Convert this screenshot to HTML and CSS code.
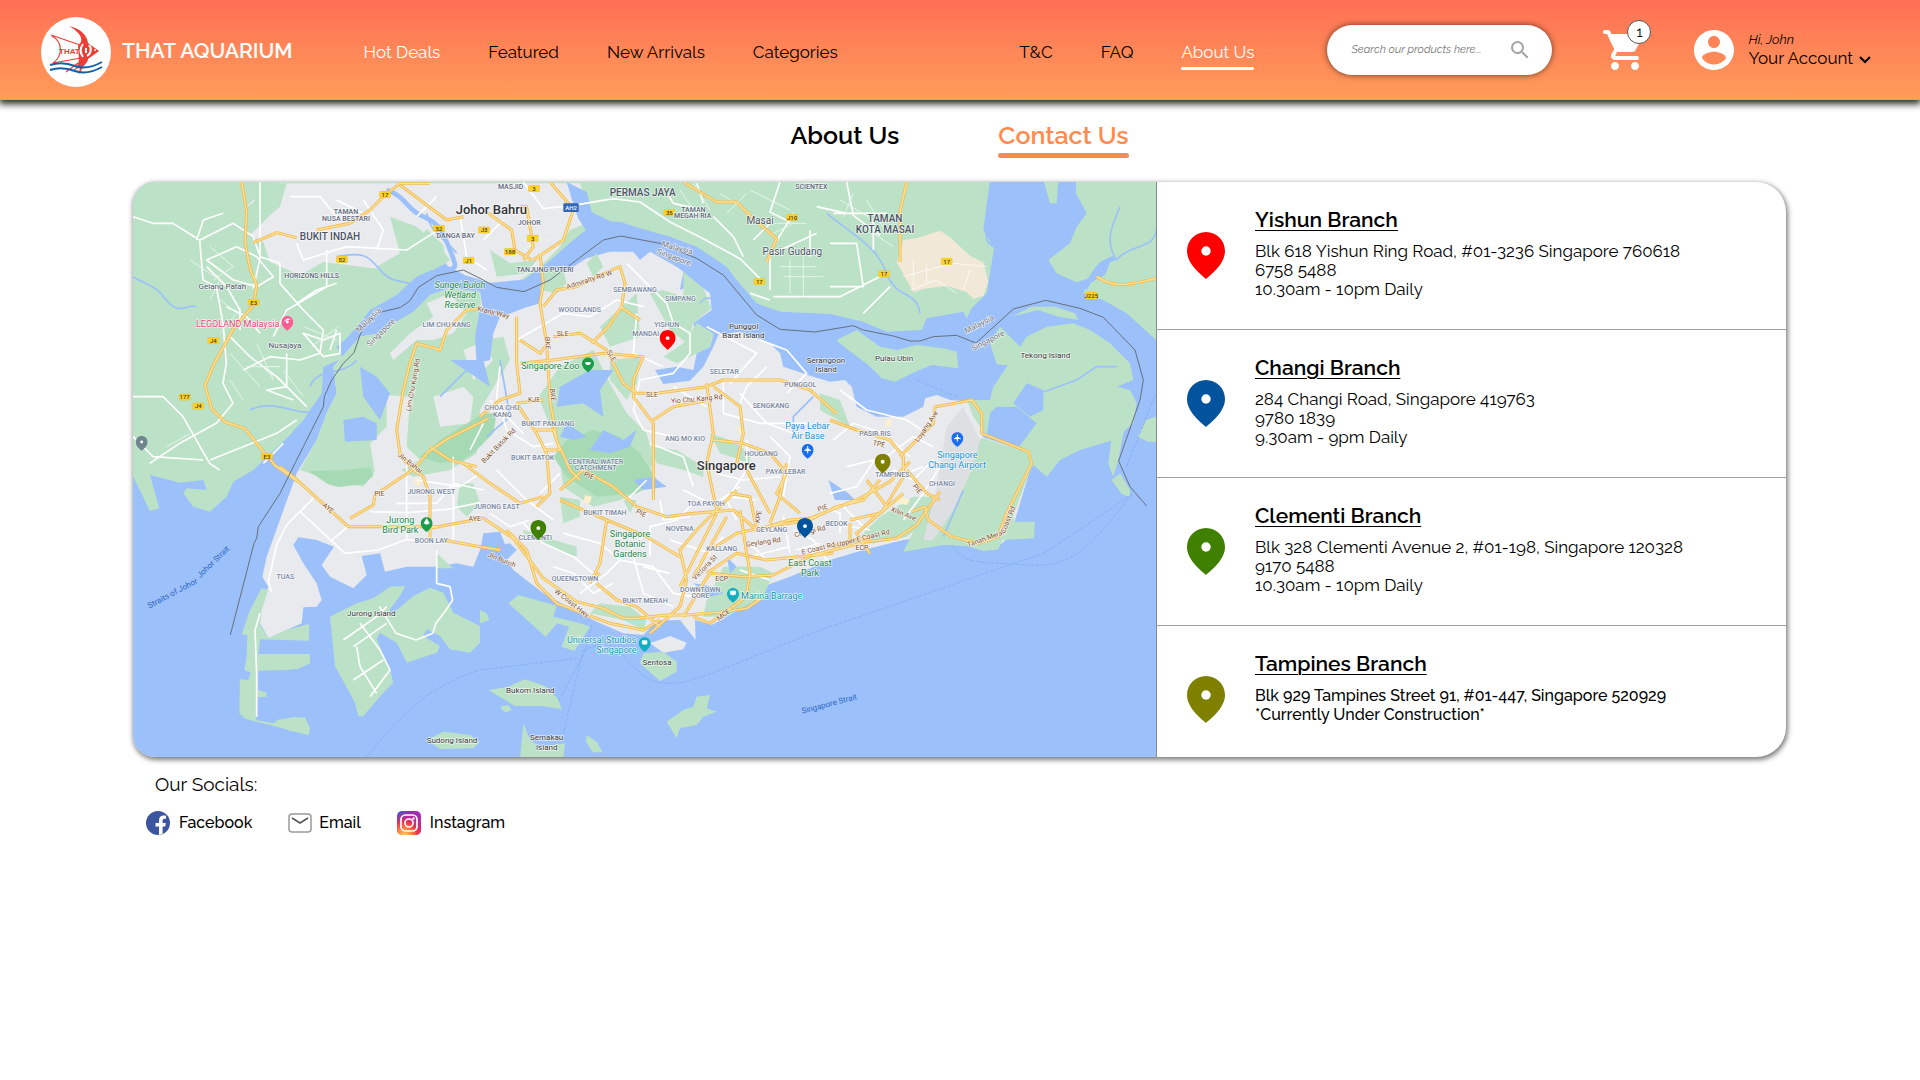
FILE: index.html
```html
<!DOCTYPE html>
<html lang="en">
<head>
<meta charset="utf-8">
<meta name="viewport" content="width=device-width, initial-scale=1">
<title>That Aquarium - Contact Us</title>
<link rel="stylesheet" href="styles.css">
</head>
<body>
<svg class="defs" aria-hidden="true">
  <symbol id="pin" viewBox="0 0 38 47"><path d="M19 0C8.500 0 0 8.500 0 19c0 12 12 22 19 28 7-6 19-16 19-28C38 8.500 29.500 0 19 0z"/><circle cx="19" cy="19" r="4.700" fill="#fff"/></symbol>
  <symbol id="shield" viewBox="0 0 36 22"><rect x="1" y="1" width="34" height="20" rx="5" fill="#fdd32e" stroke="#e0aa18"/></symbol>
</svg>

<header class="header">
  <a class="brand" href="#">
    <svg class="brand-logo" viewBox="0 0 70 70" aria-hidden="true">
      <circle cx="35" cy="35" r="35" fill="#fff"/>
      <path d="M28 9c12 3 18 9 19 17l11 8-11 8c0 4-4 5-6 10l-3 5 1-7-9 5c5-3 7-7 8-12l-1-14 3-4c2-6-5-12-12-16z" fill="#ee3d34"/>
      <path d="M10 18l32 11M11 19c11 6 11 20 1 27l28-5M37 46l-12 9" fill="none" stroke="#ee3d34" stroke-width="1.200"/>
      <path d="M42 27c-3 4-3 9 0 13M48 28c3 3 2 9-2 11M45 31v5" fill="none" stroke="#fff" stroke-width="2"/>
      <circle cx="54" cy="33" r="1" fill="#fff"/>
      <text class="brand-mark" x="18" y="37">THAT</text>
      <path d="M9 48c9-3 17-2 25 1s18 1 27-4M9 53c9-3 17-2 25 1s18 1 27-4" fill="none" stroke="#1660a8" stroke-width="2"/>
    </svg>
    <span class="brand-name">THAT AQUARIUM</span>
  </a>
  <nav class="nav nav-shop" aria-label="Shop">
    <a class="nav-light" href="#">Hot Deals</a>
    <a href="#">Featured</a>
    <a href="#">New Arrivals</a>
    <a href="#">Categories</a>
  </nav>
  <nav class="nav nav-info" aria-label="Information">
    <a href="#">T&amp;C</a>
    <a href="#">FAQ</a>
    <a class="nav-light nav-current" href="#">About Us</a>
  </nav>
  <form class="search" role="search">
    <input class="search-input" type="search" aria-label="Search our products" placeholder="Search our products here...">
    <button class="search-button" type="submit" aria-label="Search">
      <svg viewBox="0 0 24 24" width="24" height="24"><path fill="#a3a3a3" d="M15.500 14h-.79l-.28-.27A6.470 6.470 0 0 0 16 9.500 6.500 6.500 0 1 0 9.500 16c1.610 0 3.090-.59 4.230-1.570l.27.28v.79l5 4.990L20.490 19l-4.990-5zm-6 0C7.010 14 5 11.990 5 9.500S7.010 5 9.500 5 14 7.010 14 9.500 11.990 14 9.500 14z"/></svg>
    </button>
  </form>
  <a class="cart" href="#" aria-label="Shopping cart">
    <svg viewBox="0 0 24 24" width="48" height="48"><path fill="#fff" d="M7 18c-1.100 0-1.990.9-1.990 2S5.900 22 7 22s2-.9 2-2-.9-2-2-2zM2 2C.7 2 .7 4 2 4h1l3.600 7.590-1.350 2.450C4.520 15.370 5.480 17 7 17h11c1.300 0 1.300-2 0-2H7.420c-.14 0-.25-.11-.25-.25l.03-.12.9-1.630h7.450c.75 0 1.410-.41 1.750-1.030l3.580-6.490c.36-.66-.12-1.480-.88-1.480H5.210l-.67-1.430C4.380 2.200 4 2 3.640 2H2zm15 16c-1.100 0-1.990.9-1.990 2s.89 2 1.990 2 2-.9 2-2-.9-2-2-2z"/></svg>
    <span class="cart-count">1</span>
  </a>
  <button class="account" type="button">
    <svg viewBox="0 0 24 24" width="48" height="48" aria-hidden="true"><path fill="#fff" d="M12 2C6.480 2 2 6.480 2 12s4.480 10 10 10 10-4.480 10-10S17.520 2 12 2zm0 3c1.660 0 3 1.340 3 3s-1.340 3-3 3-3-1.340-3-3 1.340-3 3-3zm0 14.200c-2.500 0-4.710-1.280-6-3.220.03-1.990 4-3.080 6-3.080 1.990 0 5.970 1.090 6 3.080-1.290 1.940-3.500 3.220-6 3.220z"/></svg>
    <span class="account-text">
      <span class="account-hi">Hi, John</span>
      <span class="account-name">Your Account</span>
    </span>
    <svg class="account-arrow" viewBox="0 0 12 8" width="12" height="8" aria-hidden="true"><path d="M1 1l5 5 5-5" fill="none" stroke="#000" stroke-width="2"/></svg>
  </button>
</header>

<main class="main">
  <nav class="tabs" aria-label="About">
    <a class="tab" href="#">About Us</a>
    <a class="tab tab-current" href="#">Contact Us</a>
  </nav>

  <section class="card" aria-label="Branches">
    <div class="map">
    <svg class="map-canvas" viewBox="9 6 3069 1725" preserveAspectRatio="xMidYMid slice" role="img" aria-label="Map of Singapore with branch locations">
      <!-- Malaysia -->
      <path class="land" d="M0 0H2580L2560 150 2592 205 2570 340 2525 385 2510 415 2500 395 2390 415 2375 450 2270 455 2200 425 2100 402 1950 395 1880 370 1820 300 1790 260 1700 200 1620 170 1530 145 1470 125 1400 125 1330 180 1250 250 1180 300 1110 295 1050 265 980 240 950 250 860 290 800 345 720 390 690 430 650 475 620 500 640 535 580 560 575 640 520 720 480 765 370 870 310 905 290 950 240 995 190 980 160 940 170 925 230 930 220 900 150 908 60 885 88 985 60 993 0 870z"/>
      <path class="land" d="M2740 0h45l-5 70h-20zM2838 0v40l32 60-30 40-20 50-65 50 25 40 60 27 50-17 20-30 35-25-20 50-55 30-10 25 60 20 70 40 88 80V0zM3078 710l-30 10-25 50 30 15h25z"/>
      <!-- Johor Bahru urban area -->
      <path class="urban" d="M370 60l60-50H1350l20 60 0 60-50 20-30 50-50 50-70 50-90 8-75-22-55-30-10-60-50-50-50 70-100 50-160-20-70 40-90-40-20-60-40-20 60-60-20-60-70 50z"/>
      <path class="land" d="M380 10l90 0-20 70-60 50-20-40zM780 110l80 30 60 50 40 50-50 30-90 0-80-10 70-40zM1080 210l60 40 80 -10-30 40-90 10z"/>
      <path class="water" d="M1310 6l60 30 15 60 60 30-60 50-40-60-20-60z"/>
      <path class="sand" d="M2320 180l40-5 70-23 30 20 60 55 40 20 15 60-15 40-30 10-20-20-60-20-70 10-30 10-50-90z"/>
      <!-- Singapore mainland -->
      <path class="urban" d="M850 400L900 345 960 325 1050 335 1060 395 1130 405 1180 385 1230 370 1240 320 1300 280 1370 235 1440 215 1510 215 1530 240 1560 215 1640 260 1660 275 1650 330 1700 310 1740 340 1745 390 1690 430 1700 480 1750 465 1740 500 1700 520 1690 570 1640 560 1575 570 1600 612 1680 602 1720 560 1750 500 1765 465 1830 455 1920 490 1950 520 1960 560 2050 590 2100 605 2145 600 2165 620 2180 680 2240 710 2320 710 2380 680 2385 655 2420 645 2460 660 2530 665 2560 772 2690 815 2718 845 2700 870 2640 1070 2590 1110 2510 1095 2440 1095 2440 1062 2320 1080 2200 1110 2100 1140 1980 1190 1870 1230 1850 1270 1790 1310 1745 1335 1695 1320 1697 1380 1650 1320 1580 1322 1540 1365 1480 1360 1400 1325 1330 1290 1240 1240 1150 1170 1130 1140 1160 1110 1140 1090 1050 1110 1030 1160 980 1150 910 1160 830 1160 765 1175 750 1120 695 1128 710 1185 670 1225 600 1190 575 1155 612 1100 560 1080 505 1072 490 1095 520 1150 560 1210 575 1260 560 1280 520 1282 515 1330 415 1375 390 1330 395 1260 415 1220 397 1190 410 1130 500 880 560 780 590 700 620 640 610 560 690 470 750 460 790 430z"/>
      <!-- Parks and nature reserves -->
      <path class="land" d="M510 870L560 780 590 700 620 640 610 560 690 470 750 460 790 430 850 395 900 345 960 325 1050 335 1060 480 1120 470 1140 540 1050 690 1040 820 960 870 850 890 760 840 700 920 600 900z"/>
      <path class="urban" d="M890 370l70-30 50 60-40 60-60 20-50 0-70 60-10-20 60-60 70-50zM770 645l70 5-10 150 40 40-130 70-20-120 50-50zM910 650l90-30 30 30-10 80-90 10zM1000 510l50-20 40 50-60 60z"/>
      <path class="forest" d="M535 873l60 40 30 8 80-10 25-25-10-25-80 10zM870 830l60-50 130-80 40 0-10 60-50 50-40 30-70 10z"/>
      <path class="land" d="M395 1225L360 1290 335 1362 352 1365 350 1430 343 1470 362 1478 355 1500 330 1498 328 1600 345 1616 440 1640 535 1666 540 1645 525 1612 490 1614 470 1628 445 1620 430 1630 378 1620 383 1552 410 1550 410 1538 385 1530 383 1500 385 1472 470 1470 505 1466 540 1450 540 1422 385 1422 390 1378 537 1382 537 1332 470 1350 415 1375 390 1335 395 1290 415 1230z"/>
      <path class="land" d="M1290 560l100-50 50 100 50 90 60 60 20 80-30 90-70 30-80 20-90-60-15-120-60-150zM1410 440l110-100 10 130-90 30zM1440 540l90-10-10 80-30 50-50-60z"/>
      <path class="forest" d="M1310 780l80-30 80 20 60 50 50 80-60 40-120 10-90-60-40-60z"/>
      <path class="land" d="M1660 275l60 50 25 60-55 45-20 60-50-40-60-110 40-10 60 20zM1700 430l50 30-10 40-60 30-40 20-40-20 60-40zM1740 760l60 20 60 40 0 30-90-30zM1240 270l60 0 10 40-30 30-50-10zM1370 250l30-30 20 40-30 30zM1560 800l80 10 80 50 0 30-60-20-80-20zM1180 1050l60 20 100 30 0 30-60-20-100-50zM1410 1270l90 10 50 40-10 30-60-30-100-20zM2070 640l60 20 30 80-90-50zM920 1120l0 45 50 0zM990 910l40 0 20 60-40 40-30-30zM1290 950l60 10 0 50-50 20zM1480 960l40 0-20 40z"/>
      <path class="land" d="M2555 773l135 42 28 30-18 25-50 140 5 15 60 0-3 50-95 5-12 28-45 5-50-15-70-3-120 20 50-100 80-100 60-70zM2350 950l60 0-30 80-50 40-100 20-60 0 80-80zM1780 1160l110 0 40 20-30 70-110 60-70 0 10-50z"/>
      <path class="apron" d="M2500 680l50 100-20 80-60 130-60 90h-30l40-160 30-180z"/>
      <g class="sandy"><path d="M2270 720l15-5-5 25-15 0zM1820 740l25 5-15 20zM1365 945l20 5-5 20-20 0zM2310 950l30 10-10 15-30-5zM860 890l15 10-8 20-15-12z"/></g>
      <!-- Islands -->
      <path class="land" d="M2120 480l60-30 70 50 50 10 60-15 80 10 40 10 5 50-80-10-50 20-60 30-40-10-40-40-80-60zM2580 490l30-50 60 60 10 50-20 8-60-5zM2645 410l60-30 70 0 60 20 10 20-60-10-60-20zM2690 470l60-30 80-10 50 20 60 40 60 60 10 50-50 20 40 10 20 40-10 60-60 50-100 30-60 30-40 50-90-80 60-80-60-50-60 0-20 20-10 70-40-60-20-50 70 0 10-40z"/>
      <path class="land" d="M600 1310l20-10 60-30 50-15 50-35 45-2-15 30-30 40 0 20 70-60 50-25 40 15 30 60 80 40 0 50-30 30-60-10-30-40-40-20-10 20 50 30-10 20-90 30-30-60-50-30-10 20 40 90 10 40-30 30-60 70-15 0-10-40-60-110z"/>
      <path class="land" d="M890 1680l50-25 80 10 30 20-20 20-100 2zM1075 1530l60-10 50-22 60 20 40 40 10 30-60-10-80 0zM1110 1580l25-5 10 15-20 8zM1180 1630l20 50 30 20 75-10-5 45-130 0zM1370 1665l30 20 18 32-30 0-20-32zM1135 1270l30-25 115 32-10 33 80 20 30 10-47 73-38-13 22-60-36-10-34 40zM440 1620l60-10 25 20 15 30-60-6zM1660 1590l30 -10 10-30 40-5-10 40 30 10-40 15-20 25-50 10-10 30-30-50zM1050 1290l20 10 8 20-28 10z"/>
      <path class="urban" d="M1560 1390l60-22 50 20-10 20-60 10z"/>
      <path class="land" d="M1540 1420l60-5 40 30 0 30-50 28-60-53zM2970 880l30 50 0 20-25-8-30-42zM2990 670l10 30-20 60-15 80-15 50-15-40 10-80z"/>
      <!-- Reservoirs and rivers -->
      <path class="water" d="M1050 385l60 25-20 50-10 80-40 10-5-80zM1290 620l90-50 70 0-40 60 10 80-60-40-80 10zM1420 750l60 30 40-30-20 50-60 20-60-10zM1370 770l-40 10-40-10 20-40zM1060 1060l50-5 20 50-30 30-50-20zM690 560l50 30 40 50-30 80-50-70zM640 720l60-10 40 20 0 50-95 5zM960 540l100 0 20 80-60-40zM1510 900l60-10 40 30-70 10zM2690 610l50 20 0 60-40 20-50-40zM2095 900l60 40 20 20-60 0zM1790 1130l10 50 20-20zM1690 1210l60 10 30 20-40 10z"/>
      <path class="river" d="M9 290c50 30 60 20 100 70s60 10 90 20M620 230c100-20 100 10 140 50s80 10 90 50M980 220c-30-40-80-60-90-120M2090 100c100 80 150 100 180 180s90 50 100 120M2650 100c-30 60-70 20-80 60s40 40 50 60M2960 240c-40-60-10-110 10-160M2960 240c40-50 120-30 120-100M540 620c20-60 100-30 140-80M360 690c80-40 150 30 220 0M1710 370c20-30 60-20 80 60M2700 650l140-50 60-40h60M930 650l60-60 50-50M2500 930l-60 140M1110 540l30 170-70 60M1610 240l-10-60M2050 650l-60 60 0 60"/>
      <path class="river river-wide" d="M770 30c60 20 60 60 110 80s60 50 80 100 20 50 0 60M2955 235c-50 10-60 40-90 90"/>
      <!-- Local roads -->
      <g class="streets">
        <path d="M9 110l60 20 60 0 80 50 10 120 40 20 20 110 10 120-10 60 30 60-50 60-110 60-90 60M9 650h90l60 60 80 140 30 20M210 180l100-50 60 40 20 60 60 20 0 60 70 80 60 60-10 70-60 20-90-10-80 40M390 6v230l-20 90M500 190l20 50 130-40 180 10 110-70M590 210v110l-120 70-40 80M230 240l90-40 60 30 50 60-50 30-70-20zM230 260l60 60 40 70 0 60M240 840l200-80 60-40M400 850l60-60M200 180l20-60 60-20M290 380l60 30 40 50M300 470l60 60 80 60 90 90M470 520l0 100-60 10 80 30M520 460l60 20 50-20 0 60-50 10zM600 510l20-60M9 770l60 60 150 10M500 370l60-40 60-20"/>
        <path d="M1180 6l60 80 90-10 120-20 80 10 90 60 100 50 110 60 60 60M1600 20l30 50 90 20M1700 10l20 60M1750 110l60 60 30 60M2100 190h80l20 130h-100M2150 6l20 100 80 60M1920 220v110M1990 100l-60 100M1950 6l-30 90 60 30M2040 150l0 80M2110 100h160M2200 400l80-80M2230 120v90M1920 360l-60 -20M1930 350h200l140-70M1930 220l130-60M1870 180l60-60M2060 80l90 20M480 50l90 0 50 60M700 60l60 90-20 60M620 60l80 40M990 110l20 120 60 40M860 110l60-60M1060 180l60-60"/>
        <path class="sandroad" d="M2320 290l110-30 40 -10 100 10M2350 240v80M2390 250v60M2340 330l80-30 60 40M2520 270l-20 60"/>
        <path d="M1160 480l140-80 80 10 80-50 80 20M1490 250l60 60 60 60 20 60 50 30 0 60-50 60-100 20-20 90 30 60 90 20M1600 560l-90-40 10-120M1730 440l150 80-80 90M1910 560l-60 60-20 50M1110 560l-10 90 30 100 80 50 60-10M1060 730l-40 80M1080 660l100 100M1630 620l100 60M1560 790l100 40 30 90M1780 600v100l110 30 150 0M1890 480l80 30 60 70-60 60M1830 640l80 90 80 30M1850 780v90l-60 90 30 60M1920 770l60 60-20 120M1760 880l80 20 110-10M1660 930l80 40 60-20 80 10M1700 960l-60 60-80 20 0 90M1500 1110l60-60M1300 1060l110 30 60 50 100 20 60 80 60 10M1350 1240l80-60 60-60M1270 1160l60 20 60 60 60-30M1510 1130l30 110 90 40M1540 1160l80 20M1700 1160l80-90M1740 1120l-120-40M1590 960l10 60 80-10M1770 960l60-40M1490 960l60-60M1290 880l-60 60M1100 870l90 90 80 60M1180 1030l60 60 90 40 60 50M1080 1000l60 40 60-20"/>
        <path d="M550 955l-40 40 135 125 100-10 80-30 90 0M510 995l-40 40-30 60-25 110 10 30M720 995l110 3 120-10 100-20M830 850v230M970 830l0 250M600 1085l60-50M800 970h120l50-60 90 20M860 900l130 20 60-40M920 1110v100l40 10 8 40-20 30-30 40-10 30-50 20-60-20-50-80M640 1380l100-70 30-30M670 1400l100-70M680 1400l10 60 50 80M690 1330l60 80 30 60-60 80M670 1500l90-60M390 1300l-15 50 5 130 0 130M2110 780l60-50 90 30 80 70M2150 860l120-30 80-60 60 30M2240 830l-60 90-80 20M2290 870l60 30 60-60M2140 980l60 60M2130 1060v-60l-50-20M2100 1030l120 20M2390 760l-60-40-120-30-80-60M2300 890l80-30M2320 1020l60-80 50-80M1990 1050l60 30 40 60M1960 1010l20 110M1830 1170l90 30M1850 1080l60 60M1860 1130l120-30M2000 1110l70 -20"/>
      </g>
      <g class="streets-faint"><path d="M180 240l90 60-30 60M240 200l70 60-60 40M260 350l60 50-50 60M300 520l90 100M330 500l100 90M380 490l50 110M350 560h100M300 600l40 60M460 570l60 80M110 800l70-40M520 440l100 40M545 500l80-60M1650 30l60 90M1690 10l50 80M1770 40l90 60M1790 100l60-60M1920 130l110 0M1930 160l60 -30M1860 30l120 60M1950 260h110M1960 290h120M1980 240v100M2020 230v120M2130 60l100 60M2170 40l-30 70M2210 60l60 100M2200 140l90 60M1200 30l60 60M1090 50l120 60M1180 180h80M1150 230l90-60"/></g>
      <!-- Expressways -->
      <g class="highways">
        <path id="hw-my" d="M335 6l15 90-5 90 15 80 20 50-10 60-60 70-60 110-25 60 20 70 40 40 60 20 40 50 50 60 70 50M370 188l70-30 60 15M560 150l100-20 60-40 40-40 50-40h90M810 15l80 60 60 45 50-10M1075 100l70 50 10 60 50 30M1170 80l20 0 10 60 10 60-30 40M1330 90l-30 90-60 40-30 20M1260 6l60 70M1660 6l100 60 60 0 50 50 70 60-30 70M2330 6l-20 90v150M2900 290c60 40 110 20 180 5"/>
        <path id="hw-w" d="M450 860l40 30 165 150h230l50 0M660 1015l70-40 5-30 90-60 30-20 40-50 60-40 120-60M810 690l10-60 20-80 20-60 70 20 20-60 60-60 40-5M810 690l-10 60 10 70 50 60M900 800l60 40 80 20M900 1045l160-30 90 60 90 120 100 70 80 20 60 30h40l90-10 60 0 120-10 60-10 60-40M900 930l0 150M820 840l60 50 20 60M940 1080l110 20 60 10M1000 850l80 60 90 60 70-20"/>
        <path id="hw-n" d="M1230 220l10 90-10 60 20 120 10 170 20 120 40 90 30 30M1240 380l40-50 60-10 60-30 70-30 15 50-10 70-40 60-50 50M1270 470l80-10 80 50 50 100 40 30 60 0 150-20 50-20h170l90 30 80 70M1160 410l0 140 10 90-60 20-60 50M1160 670l80-10M1170 550l100-10 150-20 120 10-30 70 0 50 60 80 0 230M1170 480l60 40 30-40M1160 670l60 90 30 60 10 120-40 40M1210 750l60 0 20 60-50 0M1470 380l60 40"/>
        <path id="hw-c" d="M1290 930l70-60 90 50 70 60 90 30 80-10 120-10 70 60 100-30 60-5 150-60 90-50 60-60M1730 610l20 150-20 90 30 140-60 60-50 60 20 90-20 80-90 80M1750 780l90 10 80 30 50 60-30 60 70 60M1750 620l80 60 10 80-20 90M1570 720l60-40 110 -20M1830 990l20 130 10 60-10 60 30 20M1800 940l60 10 20 100M1760 990l60-60M1850 870l70 130M1970 850l-20 100-30 80M1290 960l140 60 120 50 100 60M1430 1020l-20 130-30 60M1760 1000l-110 220M1790 1010l-100 180M1740 1110l80-50 90-20 130-20 80-40 80-20 50-60M1730 1180l90-60 90 20 200-20M1660 1310l60-100 20-30 100 10 90-5 120-60 160-40 90-10 60-40 70-100M1400 1210l60 50 60 20 70 60M1380 1200l30-20M1690 1310l50 20 110-80M1590 1320l-50 30-100-20-160-60-60-60-30-100-60-60"/>
        <path id="hw-e" d="M2100 720l80 30 100 30 40 50 0 60-60 100-80 70 40 60M2310 830l100-100 5-50 60-10 50-10 30 40 0 60 140 55 10 35-80 160-20 60-60 20-80-20-70-50-10-40-40 15M2330 870l60 70 40 20M2210 900l60 80M2160 1020l90-20 70-60M2110 1100l60-20 50-10M2160 1030l0 70"/>
      </g>
      <g class="highways-core">
        <use href="#hw-my"/><use href="#hw-w"/><use href="#hw-n"/><use href="#hw-c"/><use href="#hw-e"/>
      </g>
      <!-- Maritime border and ferry routes -->
      <path class="border" d="M301 1365L372 1090 380 1075 385 1040 450 940 485 870 500 840 580 680 583 650 605 600 640 550 672 518 695 450 750 397 812 382 840 362 865 322 920 287 1000 270 1050 295 1100 322 1182 335 1260 300 1340 240 1420 180 1472 168 1590 190 1700 235 1780 285 1880 405 1950 448 2055 456 2170 437 2200 450 2290 468 2340 483 2370 483 2410 470 2480 466 2538 489 2650 387 2747 361 2850 385 2920 412 3015 510 3040 600 3030 660 2966 843 3000 920 3050 978"/>
      <path class="ferry" d="M710 1730c100-120 180-210 340-260l290-35M1385 1335l-20 80-80 150M1360 1410l-60 250M1360 1410l90-30M1470 1420c80 80 90 90 160 90s300-110 470-170l640-220c80-50 180-120 270-180M2465 1095c40 60 80 50 230 60s200-80 310-210M2990 860l88-220M2360 600l120 50"/>
      <!-- Route shields -->
      <g class="shields">
        <g transform="translate(747 32)"><use href="#shield" width="36" height="22"/><text x="18" y="11">17</text></g>
        <g transform="translate(909 134)"><use href="#shield" width="36" height="22"/><text x="18" y="11">52</text></g>
        <g transform="translate(618 227)"><use href="#shield" width="36" height="22"/><text x="18" y="11">52</text></g>
        <g transform="translate(998 230)"><use href="#shield" width="36" height="22"/><text x="18" y="11">J1</text></g>
        <g transform="translate(353 356)"><use href="#shield" width="36" height="22"/><text x="18" y="11">E3</text></g>
        <g transform="translate(393 818)"><use href="#shield" width="36" height="22"/><text x="18" y="11">E3</text></g>
        <g transform="translate(232 471)"><use href="#shield" width="36" height="22"/><text x="18" y="11">J4</text></g>
        <g transform="translate(187 667)"><use href="#shield" width="36" height="22"/><text x="18" y="11">J4</text></g>
        <g transform="translate(146 640)"><use href="#shield" width="36" height="22"/><text x="18" y="11">177</text></g>
        <g transform="translate(1194 14)"><use href="#shield" width="36" height="22"/><text x="18" y="11">3</text></g>
        <g transform="translate(1190 164)"><use href="#shield" width="36" height="22"/><text x="18" y="11">3</text></g>
        <g transform="translate(1044 139)"><use href="#shield" width="36" height="22"/><text x="18" y="11">J3</text></g>
        <g transform="translate(1122 204)"><use href="#shield" width="36" height="22"/><text x="18" y="11">188</text></g>
        <g transform="translate(1600 87)"><use href="#shield" width="36" height="22"/><text x="18" y="11">35</text></g>
        <g transform="translate(1968 101)"><use href="#shield" width="36" height="22"/><text x="18" y="11">J10</text></g>
        <g transform="translate(1870 294)"><use href="#shield" width="36" height="22"/><text x="18" y="11">17</text></g>
        <g transform="translate(2244 271)"><use href="#shield" width="36" height="22"/><text x="18" y="11">17</text></g>
        <g transform="translate(2432 233)"><use href="#shield" width="36" height="22"/><text x="18" y="11">17</text></g>
        <g transform="translate(2862 335)"><use href="#shield" width="44" height="24"/><text x="22" y="12">J225</text></g>
        <rect x="1300" y="70" width="46" height="26" rx="3" fill="#2f66b5"/><text class="shield-blue" x="1323" y="83">AH2</text>
      </g>
      <!-- Towns -->
      <g class="town">
        <text class="city" x="1084" y="88">Johor Bahru</text>
        <text class="city" x="1789" y="857">Singapore</text>
        <text class="area" x="600" y="169">BUKIT INDAH</text>
        <text class="area" x="1538" y="36">PERMAS JAYA</text>
        <text class="area" x="2265" y="116">TAMAN</text>
        <text class="area" x="2265" y="148">KOTA MASAI</text>
        <text class="village" x="1890" y="120">Masai</text>
        <text class="village" x="1987" y="214">Pasir Gudang</text>
        <text x="277" y="319">Gelang Patah</text>
        <text x="465" y="496">Nusajaya</text>
      </g>
      <g class="district">
        <text x="648" y="96">TAMAN</text><text x="648" y="116">NUSA BESTARI</text>
        <text x="545" y="288">HORIZONS HILLS</text><text x="977" y="167">DANGA BAY</text>
        <text x="1198" y="129">JOHOR</text><text x="1245" y="269">TANJUNG PUTERI</text>
        <text x="1690" y="90">TAMAN</text><text x="1688" y="109">MEGAH RIA</text><text x="2044" y="21">SCIENTEX</text><text x="1142" y="21">MASJID</text>
      </g>
      <g class="district district-sg">
        <text x="950" y="436">LIM CHU KANG</text><text x="1515" y="330">SEMBAWANG</text><text x="1651" y="357">SIMPANG</text>
        <text x="1349" y="391">WOODLANDS</text><text x="1610" y="436">YISHUN</text><text x="1547" y="461">MANDAI</text>
        <text x="1783" y="576">SELETAR</text><text x="2011" y="614">PUNGGOL</text><text x="1923" y="679">SENGKANG</text>
        <text x="1116" y="685">CHOA CHU</text><text x="1117" y="704">KANG</text><text x="1254" y="731">BUKIT PANJANG</text>
        <text x="1208" y="834">BUKIT BATOK</text><text x="1397" y="846">CENTRAL WATER</text><text x="1397" y="864">CATCHMENT</text>
        <text x="1665" y="776">ANG MO KIO</text><text x="1893" y="821">HOUGANG</text><text x="2235" y="761">PASIR RIS</text>
        <text x="904" y="937">JURONG WEST</text><text x="1100" y="980">JURONG EAST</text><text x="904" y="1083">BOON LAY</text><text x="466" y="1190">TUAS</text>
        <text x="1216" y="1074">CLEMENTI</text><text x="1425" y="999">BUKIT TIMAH</text><text x="1728" y="972">TOA PAYOH</text>
        <text x="1649" y="1047">NOVENA</text><text x="1925" y="1051">GEYLANG</text><text x="1775" y="1108">KALLANG</text>
        <text x="1967" y="875">PAYA LEBAR</text><text x="1335" y="1196">QUEENSTOWN</text><text x="1545" y="1263">BUKIT MERAH</text>
        <text x="1711" y="1229">DOWNTOWN</text><text x="1711" y="1248">CORE</text><text x="2120" y="1031">BEDOK</text>
        <text x="2287" y="886">TAMPINES</text><text x="2436" y="913">CHANGI</text>
      </g>
      <g class="island">
        <text x="1841" y="440">Punggol</text><text x="1840" y="467">Barat Island</text><text x="2088" y="540">Serangoon</text><text x="2088" y="567">Island</text>
        <text x="2292" y="536">Pulau Ubin</text><text x="2746" y="526">Tekong Island</text><text x="724" y="1299">Jurong Island</text>
        <text x="966" y="1680">Sudong Island</text><text x="1201" y="1530">Bukom Island</text><text x="1250" y="1672">Semakau</text><text x="1250" y="1701">Island</text><text x="1581" y="1448">Sentosa</text>
      </g>
      <g class="poi poi-park">
        <g font-style="italic"><text x="990" y="315">Sungei Buloh</text><text x="990" y="345">Wetland</text><text x="990" y="375">Reserve</text></g>
        <text x="1261" y="558">Singapore Zoo</text><text x="811" y="1020">Jurong</text><text x="811" y="1049">Bird Park</text>
        <text x="1500" y="1062">Singapore</text><text x="1500" y="1092">Botanic</text><text x="1500" y="1122">Gardens</text>
        <text x="2040" y="1150">East Coast</text><text x="2040" y="1180">Park</text>
      </g>
      <g class="poi poi-air"><text x="2032" y="738">Paya Lebar</text><text x="2034" y="767">Air Base</text><text x="2482" y="826">Singapore</text><text x="2481" y="856">Changi Airport</text></g>
      <g class="poi poi-fun"><text x="1925" y="1249">Marina Barrage</text><text x="1415" y="1381">Universal Studios</text><text x="1459" y="1411">Singapore</text></g>
      <text class="poi poi-lego" x="323" y="433">LEGOLAND Malaysia</text>
      <g class="road-name">
        <text transform="translate(850 615) rotate(-80)">Lim Chu Kang Rd</text><text transform="translate(1378 300) rotate(-18)">Admiralty Rd W</text>
        <text transform="translate(1090 398) rotate(14)">Kranji Way</text><text x="1298" y="461">SLE</text><text transform="translate(1444 528) rotate(60)">SLE</text><text x="1566" y="644">SLE</text>
        <text transform="translate(1252 490) rotate(88)">BKE</text><text transform="translate(1268 645) rotate(80)">BKE</text><text x="1212" y="659">KJE</text>
        <text transform="translate(1700 658) rotate(-5)">Yio Chu Kang Rd</text><text transform="translate(1106 798) rotate(-46)">Bukit Batok Rd</text><text transform="translate(840 850) rotate(38)">Jln Bahar</text>
        <text transform="translate(2390 740) rotate(-56)">Loyang Ave</text><text transform="translate(2247 793) rotate(12)">TPE</text><text transform="translate(594 985) rotate(42)">AYE</text>
        <text x="748" y="942">PIE</text><text x="1034" y="1018">AYE</text><text transform="translate(1377 888) rotate(20)">PIE</text><text transform="translate(1533 1000) rotate(25)">PIE</text>
        <text transform="translate(1886 1010) rotate(-80)">KPE</text><text transform="translate(1900 1087) rotate(-8)">Geylang Rd</text><text transform="translate(2040 1055) rotate(-14)">Changi Rd</text>
        <text transform="translate(2065 1106) rotate(-14)">E Coast Rd</text><text transform="translate(2200 1075) rotate(-14)">Upper E Coast Rd</text><text transform="translate(2078 985) rotate(-20)">PIE</text>
        <text transform="translate(1725 1163) rotate(-46)">Victoria St</text><text x="1775" y="1197">ECP</text><text x="2196" y="1105">ECP</text><text transform="translate(1781 1305) rotate(-36)">MCE</text>
        <text transform="translate(1325 1270) rotate(38)">W Coast Hwy</text><text transform="translate(1115 1140) rotate(22)">Jln Buroh</text><text transform="translate(2320 1002) rotate(22)">Xilin Ave</text><text transform="translate(2361 927) rotate(52)">PIE</text>
        <text transform="translate(2570 1075) rotate(-20)">Tanah Merah</text><text transform="translate(2635 1020) rotate(-68)">Coast Rd</text>
      </g>
      <g class="country">
        <text transform="translate(716 420) rotate(-44)">Malaysia</text><text transform="translate(753 458) rotate(-44)">Singapore</text>
        <text transform="translate(1642 204) rotate(16)">Malaysia</text><text transform="translate(1632 232) rotate(20)">Singapore</text>
        <text transform="translate(2548 433) rotate(-27)">Malaysia</text><text transform="translate(2574 482) rotate(-27)">Singapore</text>
      </g>
      <g class="sea">
        <text transform="translate(128 1240) rotate(-28)">Straits of Johor</text><text transform="translate(250 1146) rotate(-44)">Johor Strait</text><text transform="translate(2098 1572) rotate(-15)">Singapore Strait</text>
      </g>
      <!-- Place pins -->
      <g class="places">
        <use href="#pin" x="454" y="404" width="36" height="52" fill="#ff5c93"/>
        <use href="#pin" x="17" y="764" width="36" height="52" fill="#70858f"/>
        <use href="#pin" x="1356" y="530" width="36" height="50" fill="#1c9c4b"/>
        <use href="#pin" x="872" y="1008" width="36" height="52" fill="#1c9c4b"/>
        <use href="#pin" x="2015" y="788" width="36" height="52" fill="#1a6ff0"/>
        <use href="#pin" x="2464" y="753" width="36" height="52" fill="#1a6ff0"/>
        <use href="#pin" x="1791" y="1220" width="36" height="52" fill="#12aec0"/>
        <use href="#pin" x="1526" y="1368" width="36" height="52" fill="#12aec0"/>
      </g>
      <g stroke="#fff" stroke-width="3" fill="#fff">
        <path d="M2033 798v22M2023 812l10-6 10 6M2482 763v22M2472 777l10-6 10 6"/>
        <path d="M890 1016l-8 14h16zM1366 548a8 6 0 0 0 16 0zM1801 1233h16v10h-16zM1537 1382h14v10h-14zM463 424l8-8 10 2" stroke-width="2"/>
      </g>
      <!-- Branch pins -->
      <use class="pin-yishun" href="#pin" x="1589" y="450" width="48" height="60"/>
      <use class="pin-changi" href="#pin" x="2001" y="1014" width="48" height="60"/>
      <use class="pin-clementi" href="#pin" x="1201" y="1020" width="48" height="60"/>
      <use class="pin-tampines" href="#pin" x="2234" y="821" width="48" height="60"/>
    </svg>
    </div>
    <ul class="branches">
      <li class="branch">
        <svg class="branch-pin pin-yishun" aria-hidden="true"><use href="#pin"/></svg>
        <div><h2 class="branch-name">Yishun Branch</h2><p>Blk 618 Yishun Ring Road, #01-3236 Singapore 760618</p><p>6758 5488</p><p>10.30am - 10pm Daily</p></div>
      </li>
      <li class="branch">
        <svg class="branch-pin pin-changi" aria-hidden="true"><use href="#pin"/></svg>
        <div><h2 class="branch-name">Changi Branch</h2><p>284 Changi Road, Singapore 419763</p><p>9780 1839</p><p>9.30am - 9pm Daily</p></div>
      </li>
      <li class="branch">
        <svg class="branch-pin pin-clementi" aria-hidden="true"><use href="#pin"/></svg>
        <div><h2 class="branch-name">Clementi Branch</h2><p>Blk 328 Clementi Avenue 2, #01-198, Singapore 120328</p><p>9170 5488</p><p>10.30am - 10pm Daily</p></div>
      </li>
      <li class="branch branch-closed">
        <svg class="branch-pin pin-tampines" aria-hidden="true"><use href="#pin"/></svg>
        <div><h2 class="branch-name">Tampines Branch</h2><p>Blk 929 Tampines Street 91, #01-447, Singapore 520929</p><p>*Currently Under Construction*</p></div>
      </li>
    </ul>
  </section>

  <section class="socials">
    <h2 class="socials-title">Our Socials:</h2>
    <div class="socials-list">
      <a class="social" href="#">
        <svg viewBox="0 0 24 24" width="24" height="24" aria-hidden="true"><circle cx="12" cy="12" r="12" fill="#3b559f"/><path fill="#fff" d="M13 24v-8.500H9.500V12H13V9.500C13 6.300 14.800 4.500 17.600 4.500c1.300 0 2.400.2 2.400.2v3h-1.400c-1.500 0-2 .9-2 1.900V12h3.200l-.5 3.500h-2.700v7.600z"/></svg>
        Facebook
      </a>
      <a class="social" href="#">
        <svg class="mail" viewBox="0 0 24 20" width="24" height="20" aria-hidden="true"><rect x="1" y="1" width="22" height="18" rx="3" fill="#fff" stroke="#9a9a9a" stroke-width="1.500"/><path d="M4 5l8 5 8-5" fill="none" stroke="#555" stroke-width="1.500"/></svg>
        Email
      </a>
      <a class="social" href="#">
        <svg viewBox="0 0 24 24" width="24" height="24" aria-hidden="true">
          <defs>
            <linearGradient id="ig-a" x1="0" y1="0" x2="1" y2="0.300"><stop offset="0" stop-color="#3f5bd8"/><stop offset="0.500" stop-color="#8a2fc0"/><stop offset="1" stop-color="#b52aa8"/></linearGradient>
            <radialGradient id="ig-b" cx="0.300" cy="1.050" r="1"><stop offset="0" stop-color="#ffd54f"/><stop offset="0.300" stop-color="#ff8a3c"/><stop offset="0.600" stop-color="#f0304a"/><stop offset="1" stop-color="#d0208a" stop-opacity="0"/></radialGradient>
          </defs>
          <rect width="24" height="24" rx="5" fill="url(#ig-a)"/><rect width="24" height="24" rx="5" fill="url(#ig-b)"/>
          <rect x="4" y="4" width="16" height="16" rx="4.500" fill="none" stroke="#fff" stroke-width="1.700"/><circle cx="12" cy="12" r="4" fill="none" stroke="#fff" stroke-width="1.700"/><circle cx="16.500" cy="7.500" r="1.200" fill="#fff"/>
        </svg>
        Instagram
      </a>
    </div>
  </section>
</main>
</body>
</html>
```

FILE: styles.css
```css
* { box-sizing: border-box; }

body {
  margin: 0;
  background: #fff;
  color: #000;
  font-family: Raleway, Lato, "Open Sans", sans-serif;
  font-size: 17px;
  font-weight: 400;
  font-variant-numeric: oldstyle-nums;
}

a { color: inherit; text-decoration: none; }
h2, p, ul { margin: 0; padding: 0; }
button { padding: 0; border: 0; background: none; color: inherit; font: inherit; cursor: pointer; }
.defs { position: absolute; width: 0; height: 0; }

/* Header */
.header {
  display: flex;
  align-items: center;
  height: 100px;
  padding: 0 49px 0 41px;
  background: linear-gradient(#ff7055, #ff9c5a);
  box-shadow: 0 3px 7px 1px rgba(0, 0, 0, 0.85);
  white-space: nowrap;
}
.brand { display: flex; align-items: center; gap: 11px; color: #fff; }
.brand-logo { width: 70px; height: 70px; margin-top: 4px; }
.brand-mark { fill: #ee3d34; font-size: 8px; font-weight: 700; font-family: "Liberation Sans", sans-serif; }
.brand-name { font-size: 21px; font-weight: 600; }
.nav { display: flex; gap: 48px; line-height: 24px; padding-top: 3px; }
.nav-shop { margin-left: 71px; }
.nav-info { margin-left: auto; }
.nav-light { color: #fff; }
.nav-current { position: relative; }
.nav-current::after {
  content: "";
  position: absolute;
  left: 0;
  right: 0;
  bottom: -6px;
  height: 3px;
  border-radius: 2px;
  background: #fff;
}
.search {
  display: flex;
  align-items: center;
  width: 225px;
  height: 50px;
  margin-left: 73px;
  padding: 0 20px 0 24px;
  border-radius: 25px;
  background: #fff;
  box-shadow: 0 0 6px rgba(0, 0, 0, 0.6);
}
.search-input {
  flex: 1;
  min-width: 0;
  padding: 0;
  border: 0;
  outline: 0;
  background: none;
  font: italic 11px/24px Raleway, Lato, "Open Sans", sans-serif;
}
.search-input::placeholder { color: #757575; opacity: 1; }
.search-button { height: 24px; }
.cart { position: relative; height: 48px; margin-left: 49px; }
.cart-count {
  position: absolute;
  top: -6px;
  right: -2px;
  width: 24px;
  height: 24px;
  border: 1px solid #555;
  border-radius: 50%;
  background: #fff;
  font-size: 14px;
  line-height: 22px;
  text-align: center;
}
.account { display: flex; align-items: center; margin-left: 41px; text-align: left; }
.account-text { display: flex; flex-direction: column; margin-left: 10px; }
.account-hi { font-size: 13px; font-style: italic; line-height: 16px; }
.account-name { line-height: 20px; }
.account-arrow { margin: 20px 0 0 6px; }

/* Page */
.main { padding: 0 134px 0 133px; }
.tabs { display: flex; justify-content: center; gap: 99px; padding: 20px 0 24px; }
.tab { padding-bottom: 3px; border-bottom: 5px solid transparent; font-size: 25px; font-weight: 600; line-height: 30px; }
.tab-current { position: relative; color: #ff8a50; }
.tab-current::after {
  content: "";
  position: absolute;
  left: 0;
  right: 0;
  bottom: -5px;
  height: 5px;
  border-radius: 3px;
  background: #ff8a50;
}

/* Map and branches */
.card {
  display: grid;
  grid-template-columns: 1023fr 630fr;
  border-radius: 22px 30px 30px 22px;
  background: #fff;
  box-shadow: 1px 2px 5px 1px rgba(0, 0, 0, 0.5);
  overflow: hidden;
}
.map { position: relative; background: #9cc0fa; font-variant-numeric: lining-nums; }
.map-canvas { position: absolute; inset: 0; width: 100%; height: 100%; }
.branches { border-left: 1px solid #8a8a8a; list-style: none; }
.branch {
  display: flex;
  align-items: flex-start;
  gap: 30px;
  min-height: 148px;
  padding: 26px 20px 20px 30px;
  border-bottom: 1px solid #a0a0a0;
  line-height: 19px;
}
.branch-closed { min-height: 131px; border-bottom: 0; font-size: 16px; font-weight: 500; }
.branch-pin { flex: none; width: 38px; height: 47px; margin-top: 24px; }
.branch-name {
  margin-bottom: 10px;
  font-size: 21px;
  font-weight: 600;
  line-height: 24px;
  text-decoration: underline;
  text-decoration-thickness: 1px;
  text-underline-offset: 3px;
}
.pin-yishun { fill: #f00; }
.pin-changi { fill: #00539c; }
.pin-clementi { fill: #408000; }
.pin-tampines { fill: #808000; }

/* Map drawing: three units make one pixel */
.map-canvas text { font-family: Roboto, sans-serif; dominant-baseline: central; text-anchor: middle; paint-order: stroke; stroke: rgba(255, 255, 255, 0.8); stroke-width: 4px; stroke-linejoin: round; }
.land { fill: #bbe2c6; }
.forest { fill: #a6dab4; }
.urban { fill: #e8eaed; }
.apron { fill: #dddfe3; }
.sand { fill: #f2e8d8; }
.sandy { fill: #fdf0cd; }
.water { fill: #9cc0fa; }
.river { fill: none; stroke: #9cc0fa; stroke-width: 5px; }
.river-wide { stroke-width: 14px; }
.streets { fill: none; stroke: #fff; stroke-width: 5px; stroke-linejoin: round; }
.sandroad { stroke-width: 2px; }
.streets-faint { fill: none; stroke: #e6f5ea; stroke-width: 3px; }
.highways { fill: none; stroke: #f4b94a; stroke-width: 9px; stroke-linejoin: round; }
.highways-core { fill: none; stroke: #fde29a; stroke-width: 4px; stroke-linejoin: round; }
.border { fill: none; stroke: #66707c; stroke-width: 3px; }
.ferry { fill: none; stroke: #78a6f2; stroke-width: 2px; stroke-dasharray: 10 5; }
.map-canvas .shields text { fill: #4a3c00; font-size: 18px; font-weight: 500; stroke: none; }
.map-canvas .shields .shield-blue { fill: #fff; }
.town { fill: #4a5365; font-size: 24px; }
.town .city { fill: #303238; font-size: 39px; font-weight: 500; }
.town .area { font-size: 30px; font-weight: 500; }
.town .village { font-size: 30px; }
.district { fill: #5c6578; font-size: 21px; font-weight: 500; }
.district-sg { fill: #75849f; }
.island { fill: #333; font-size: 24px; }
.poi { font-size: 27px; }
.poi-park { fill: #1b8447; }
.poi-air { fill: #1590d8; }
.poi-fun { fill: #0e98b0; }
.poi-lego { fill: #e83e7c; }
.road-name { fill: #7c4a28; font-size: 21px; }
.country { fill: #70757f; font-size: 24px; }
.map-canvas .sea text { fill: #2c66c4; font-size: 24px; stroke: none; }

/* Socials */
.socials { padding: 15px 0 40px 13px; }
.socials-title { margin-left: 9px; font-size: 19px; font-weight: 400; line-height: 24px; }
.socials-list { display: flex; gap: 36px; margin-top: 15px; }
.social { display: flex; align-items: center; gap: 9px; font-size: 16px; font-weight: 500; line-height: 24px; }
.mail { margin-right: -2px; }
```
